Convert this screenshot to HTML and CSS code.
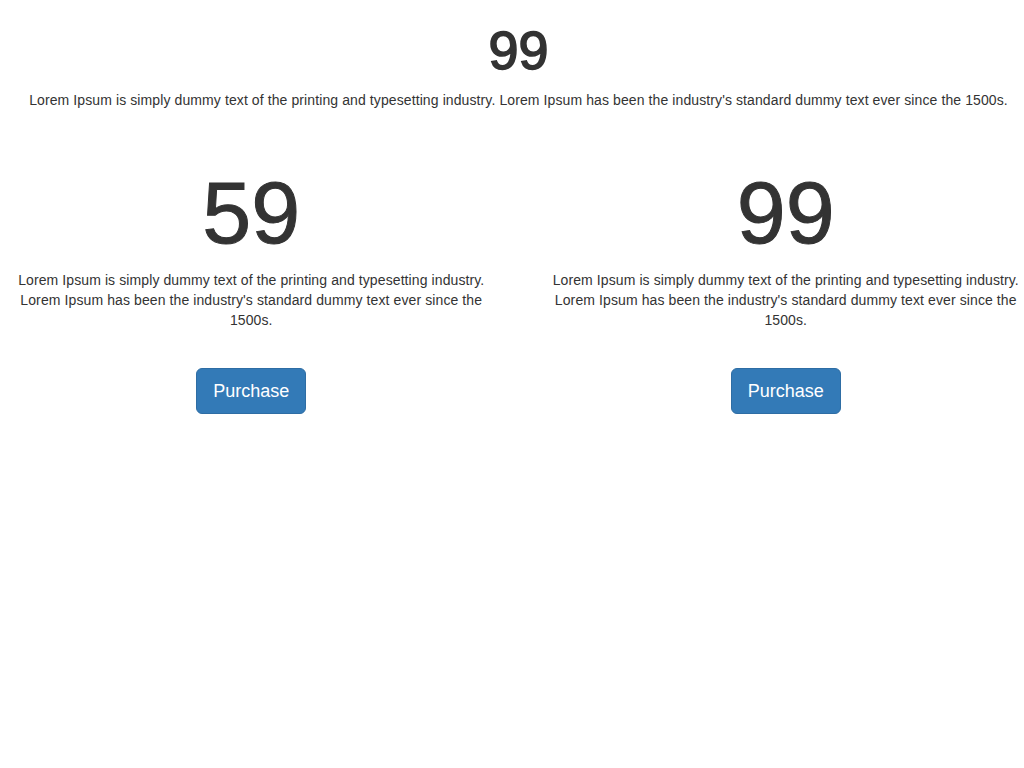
FILE: index.html
```html
<!DOCTYPE html>
<html lang="en">
<head>
<meta charset="utf-8">
<title>Pricing</title>
<link rel="stylesheet" href="styles.css">
</head>
<body>
<div class="page">
  <section class="hero">
    <h1 class="hero-price">99</h1>
    <p class="text">Lorem Ipsum is simply dummy text of the printing and typesetting industry. Lorem Ipsum has been the industry's standard dummy text ever since the 1500s.</p>
  </section>
  <section class="plans">
    <div class="plan">
      <h2 class="plan-price">59</h2>
      <p class="text plan-text">Lorem Ipsum is simply dummy text of the printing and typesetting industry. Lorem Ipsum has been the industry's standard dummy text ever since the 1500s.</p>
      <div class="actions"><button class="btn">Purchase</button></div>
    </div>
    <div class="plan">
      <h2 class="plan-price">99</h2>
      <p class="text plan-text">Lorem Ipsum is simply dummy text of the printing and typesetting industry. Lorem Ipsum has been the industry's standard dummy text ever since the 1500s.</p>
      <div class="actions"><button class="btn">Purchase</button></div>
    </div>
  </section>
</div>
</body>
</html>
```

FILE: styles.css
```css
html, body {
  margin: 0;
  padding: 0;
  background: #fff;
}
body {
  font-family: "Liberation Sans", Arial, sans-serif;
  font-size: 14px;
  line-height: 20px;
  color: #333;
  overflow: hidden;
}
.page {
  width: 1069px;
  margin-left: -16px;
}
.hero {
  text-align: center;
  padding: 0 15px;
}
.hero-price {
  font-size: 54px;
  font-weight: normal;
  -webkit-text-stroke: 1.6px #333;
  line-height: 59.4px;
  margin: 21px 0 10px;
}
.text {
  margin: 0 0 10px;
  letter-spacing: 0.1px;
}
.plans {
  display: grid;
  grid-template-columns: 1fr 1fr;
  margin-top: 55px;
}
.plan {
  padding: 0 15px;
  text-align: center;
}
.plan-price {
  font-size: 88px;
  font-weight: normal;
  -webkit-text-stroke: 1px #333;
  line-height: 96.8px;
  margin: 0 0 8px;
}
.plan-text {
  max-width: 490px;
  margin-left: auto;
  margin-right: auto;
}
.actions {
  margin-top: 38px;
}
.btn {
  font-family: "Liberation Sans", Arial, sans-serif;
  font-size: 18px;
  line-height: 24px;
  padding: 10px 16px;
  color: #fff;
  background: #337ab7;
  border: 1px solid #2e6da4;
  border-radius: 6px;
  cursor: pointer;
}
```
